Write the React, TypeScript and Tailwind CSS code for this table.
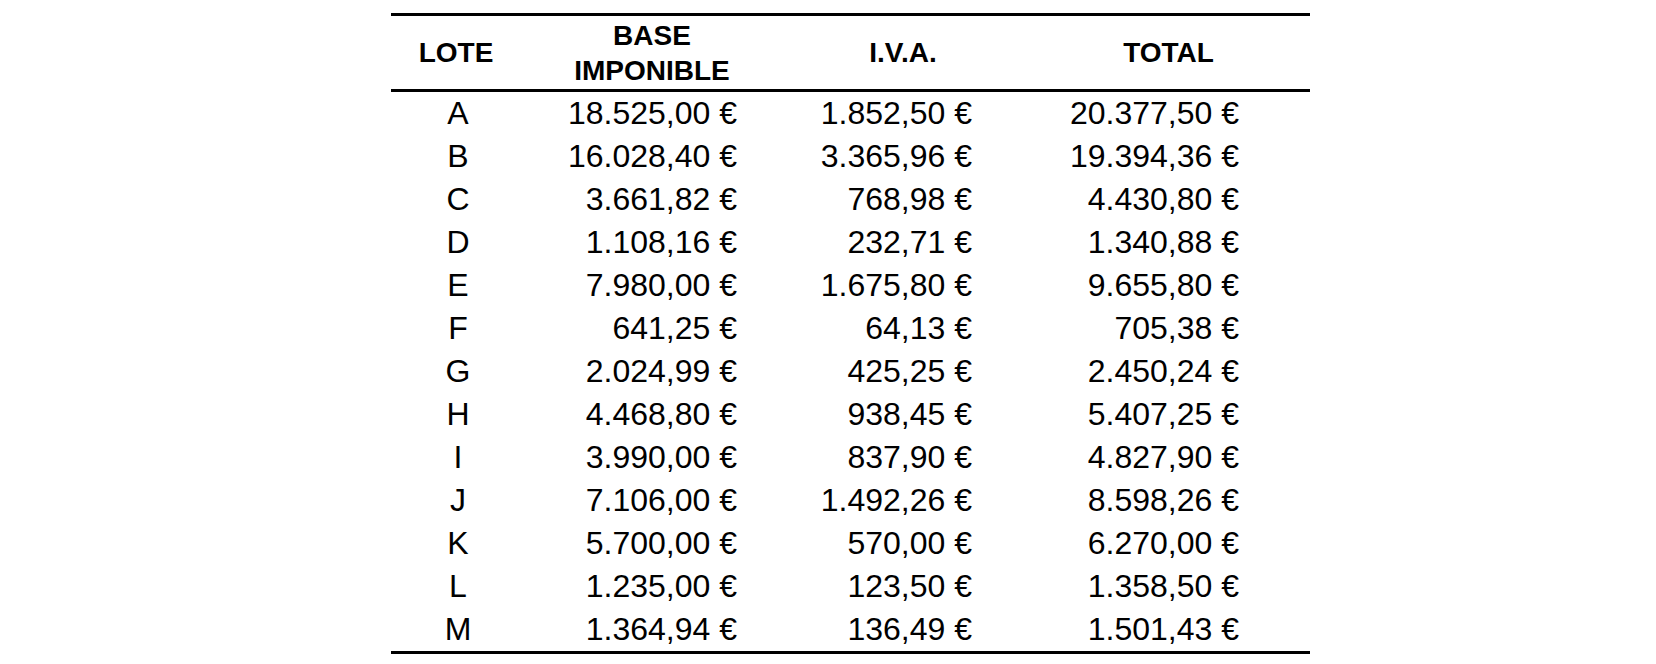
const rows: [string, string, string, string][] = [
  ['A', '18.525,00 €', '1.852,50 €', '20.377,50 €'],
  ['B', '16.028,40 €', '3.365,96 €', '19.394,36 €'],
  ['C', '3.661,82 €', '768,98 €', '4.430,80 €'],
  ['D', '1.108,16 €', '232,71 €', '1.340,88 €'],
  ['E', '7.980,00 €', '1.675,80 €', '9.655,80 €'],
  ['F', '641,25 €', '64,13 €', '705,38 €'],
  ['G', '2.024,99 €', '425,25 €', '2.450,24 €'],
  ['H', '4.468,80 €', '938,45 €', '5.407,25 €'],
  ['I', '3.990,00 €', '837,90 €', '4.827,90 €'],
  ['J', '7.106,00 €', '1.492,26 €', '8.598,26 €'],
  ['K', '5.700,00 €', '570,00 €', '6.270,00 €'],
  ['L', '1.235,00 €', '123,50 €', '1.358,50 €'],
  ['M', '1.364,94 €', '136,49 €', '1.501,43 €'],
];

const grid = 'grid grid-cols-[134px_254px_248px_283px]';

export default function App() {
  return (
    <div className="w-[1656px] h-[664px] bg-white pt-[13px] pl-[391px] font-['Liberation_Sans',Arial,sans-serif] text-black">
      <div className="w-[919px] border-t-[3px] border-b-[3px] border-black">
        {/* header */}
        <div className={`${grid} h-[76px] items-center border-b-[3px] border-black text-[28px] font-bold leading-[35px]`}>
          <div className="text-center pr-[4px]">LOTE</div>
          <div className="text-center">
            BASE
            <br />
            IMPONIBLE
          </div>
          <div className="text-center">I.V.A.</div>
          <div className="text-center">TOTAL</div>
        </div>

        {/* body */}
        <div className="text-[32px] leading-[43px]">
          {rows.map(([lote, base, iva, total]) => (
            <div key={lote} className={grid}>
              <div className="text-center">{lote}</div>
              <div className="text-right pr-[42px]">{base}</div>
              <div className="text-right pr-[55px]">{iva}</div>
              <div className="text-right pr-[71px]">{total}</div>
            </div>
          ))}
        </div>
      </div>
    </div>
  );
}
